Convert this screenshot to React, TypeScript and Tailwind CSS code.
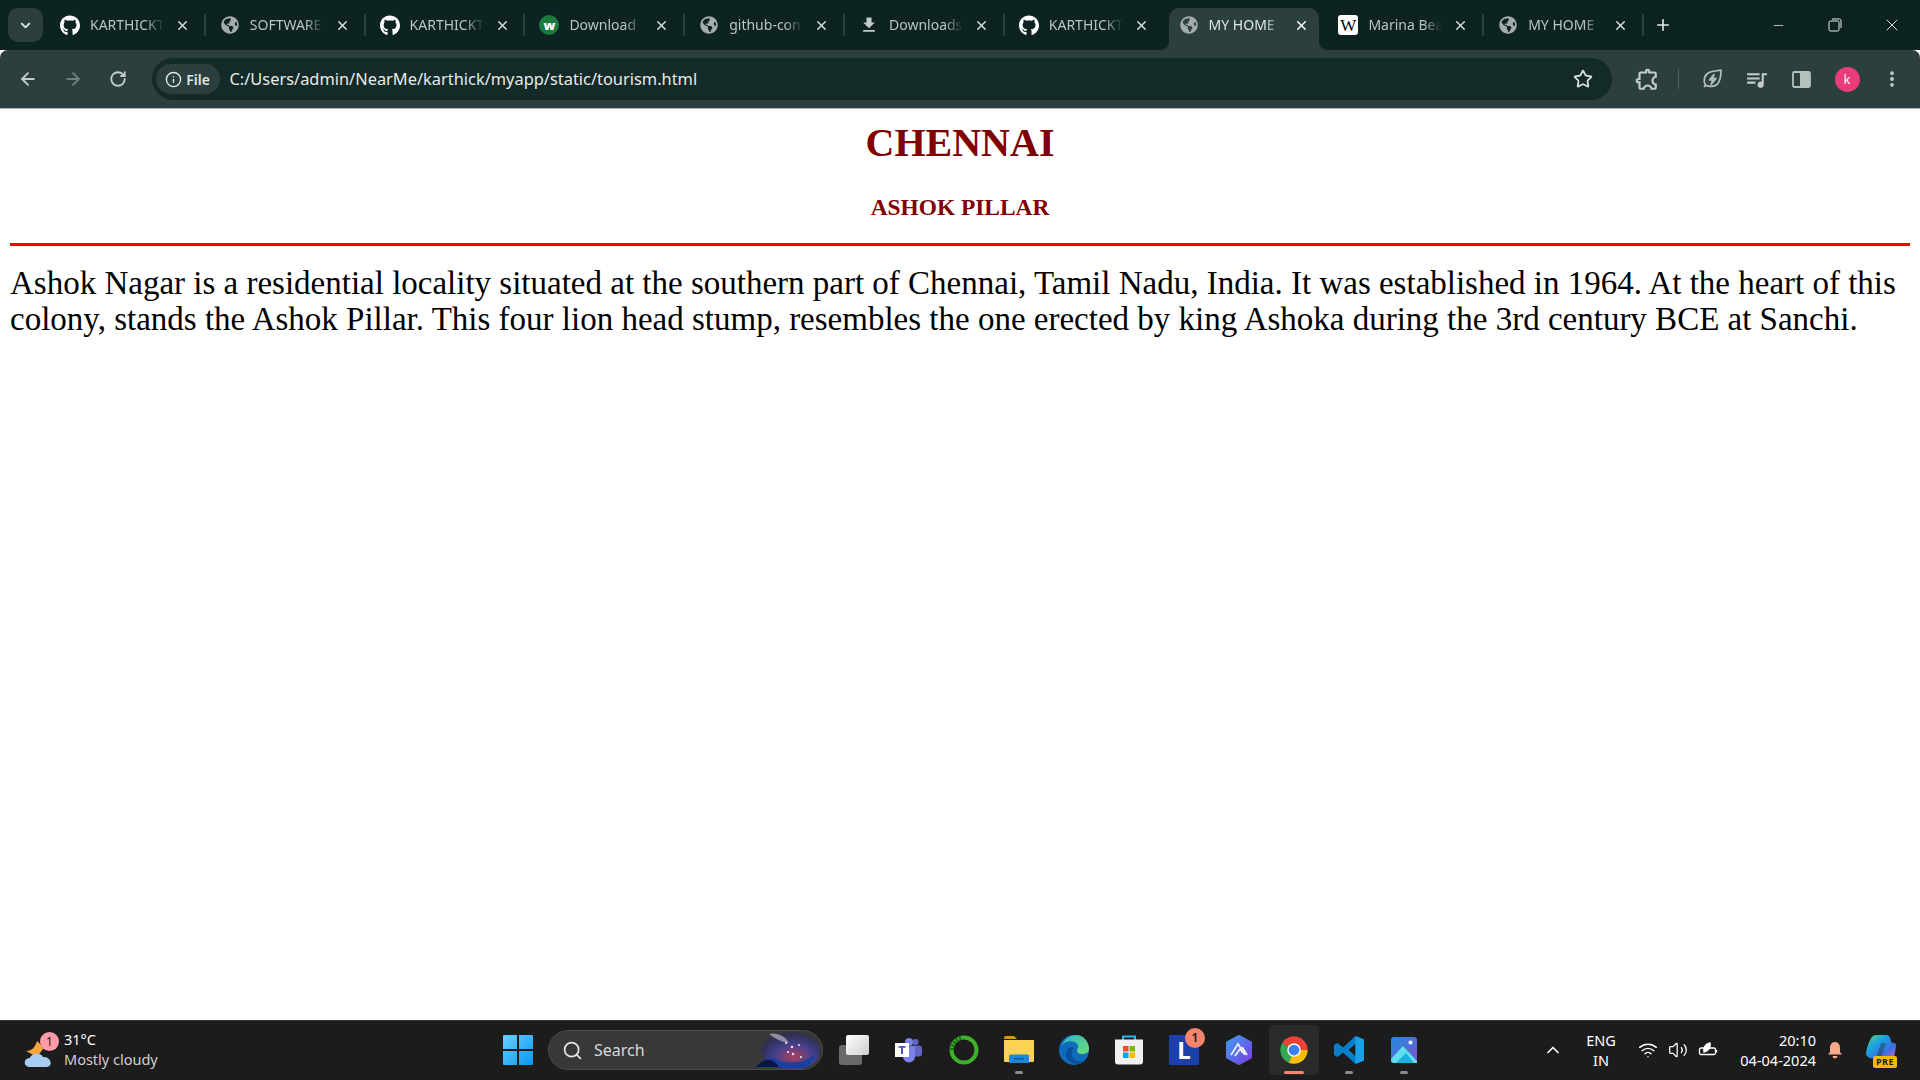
import { ArrowLeft, ArrowRight, ChevronDown, ChevronUp, EllipsisVertical, Info, Minus, Plus, RotateCw, Search, Star, Volume2, Wifi, X } from "lucide-react";
import { FaGithub, FaGlobeAmericas } from "react-icons/fa";
import { MdFileDownload, MdOutlineExtension, MdOutlineQueueMusic } from "react-icons/md";

const tabs = [
  { title: "KARTHICKT", icon: "github" },
  { title: "SOFTWARE", icon: "globe" },
  { title: "KARTHICKT", icon: "github" },
  { title: "Download", icon: "wise" },
  { title: "github-con", icon: "globe" },
  { title: "Downloads", icon: "download" },
  { title: "KARTHICKT", icon: "github" },
  { title: "MY HOME", icon: "globe", active: true },
  { title: "Marina Bea", icon: "wiki" },
  { title: "MY HOME", icon: "globe" },
];

function TabIcon({ icon }: { icon: string }) {
  if (icon === "github") return <FaGithub className="size-[21px] text-white" />;
  if (icon === "globe") return <FaGlobeAmericas className="size-[18px] text-[#a3acab]" />;
  if (icon === "download") return <MdFileDownload className="size-[22px] text-[#c3ccca]" />;
  if (icon === "wise")
    return (
      <span className="flex size-[20px] items-center justify-center rounded-full bg-[#1b7a3d] text-[13px] font-black leading-none text-white">
        w
      </span>
    );
  return (
    <span className="flex size-[20px] items-center justify-center rounded-[3px] bg-white font-['Liberation_Serif',serif] text-[17px] leading-none text-black">
      W
    </span>
  );
}

function Tab({ title, icon, active, hideSep }: { title: string; icon: string; active?: boolean; hideSep?: boolean }) {
  return (
    <div className="relative flex h-[42px] w-[159.8px] shrink-0 items-center pb-[8px] pl-[14px]">
      {active && (
        <>
          <div className="absolute inset-y-0 left-[4px] right-[5px] rounded-t-[10px] bg-[#2b403e]" />
          <svg className="absolute bottom-0 left-[-4px] size-[8px]" viewBox="0 0 8 8">
            <path d="M8 0v8H0a8 8 0 0 0 8-8z" fill="#2b403e" />
          </svg>
          <svg className="absolute bottom-0 right-[-3px] size-[8px]" viewBox="0 0 8 8">
            <path d="M0 0v8h8a8 8 0 0 1-8-8z" fill="#2b403e" />
          </svg>
        </>
      )}
      <div className="relative flex w-[20px] justify-center">
        <TabIcon icon={icon} />
      </div>
      <span
        className={`relative ml-[10px] w-[74px] overflow-hidden whitespace-nowrap font-['Noto_Sans',sans-serif] text-[14px] leading-[20px] [mask-image:linear-gradient(90deg,#000_75%,transparent_100%)] ${
          active ? "text-[#dfe6e4]" : "text-[#b9c5c2]"
        }`}
      >
        {title}
      </span>
      <X className={`relative ml-[11px] size-[15px] ${active ? "text-white" : "text-[#d5dcda]"}`} strokeWidth={2.4} />
      {!hideSep && <div className="absolute right-0 top-[6px] h-[22px] w-[2px] bg-[#2b403e]" />}
    </div>
  );
}

function TabStrip() {
  return (
    <div className="flex h-[50px] shrink-0 items-end bg-[#0c2321]">
      <div className="mb-[8px] ml-[8px] mr-[3px] flex h-[34px] w-[35px] shrink-0 items-center justify-center rounded-[10px] bg-[#2b403e] text-[#dfe6e4]">
        <ChevronDown className="size-[15px]" strokeWidth={3} />
      </div>
      {tabs.map((tab, i) => (
        <Tab key={i} title={tab.title} icon={tab.icon} active={tab.active} hideSep={i === 6 || i === 7} />
      ))}
      <div className="mb-[16px] ml-[5px] flex w-[28px] items-center justify-center text-[#dfe6e4]">
        <Plus className="size-[18px]" strokeWidth={2.2} />
      </div>
      <div className="mb-0 ml-auto flex h-full items-start">
        <div className="flex h-[50px] w-[57px] items-center justify-center text-[#e8eeec]">
          <Minus className="size-[15px]" strokeWidth={1.2} />
        </div>
        <div className="flex h-[50px] w-[56px] items-center justify-center">
          <svg className="size-[14px]" viewBox="0 0 14 14" fill="none" stroke="#e8eeec" strokeWidth="1">
            <rect x="1" y="3" width="10" height="10" rx="1.5" />
            <path d="M4 1h7.5A1.5 1.5 0 0 1 13 2.500V10" />
          </svg>
        </div>
        <div className="flex h-[50px] w-[57px] items-center justify-center text-[#e8eeec]">
          <X className="size-[20px]" strokeWidth={1.1} />
        </div>
      </div>
    </div>
  );
}

function Toolbar() {
  return (
    <div className="flex h-[59px] shrink-0 items-center rounded-t-[8px] border-b border-[#a9b3b1] bg-[#2b403e] pl-[5px] text-[#c3cecb]">
      <div className="flex w-[45.500px] justify-center">
        <ArrowLeft className="size-[20px]" strokeWidth={2.2} />
      </div>
      <div className="flex w-[45.500px] justify-center text-[#6f807d]">
        <ArrowRight className="size-[20px]" strokeWidth={2.2} />
      </div>
      <div className="flex w-[44.500px] justify-center">
        <RotateCw className="size-[18px]" strokeWidth={2.4} />
      </div>
      <div className="ml-[11px] flex h-[42px] w-[1460px] items-center rounded-full bg-[#132a28] pl-[4px] pr-[19px]">
        <div className="flex h-[30px] w-[64px] items-center justify-center gap-[4px] rounded-full bg-[#2b403e] font-['Noto_Sans',sans-serif] text-[14px] font-semibold text-[#dfe6e4]">
          <Info className="size-[17px]" strokeWidth={2} />
          File
        </div>
        <span className="ml-[10px] font-['Noto_Sans',sans-serif] text-[16.4px] leading-none text-[#e6ecea]">
          C:/Users/admin/NearMe/karthick/myapp/static/tourism.html
        </span>
        <Star className="ml-auto size-[20px] text-[#d5dcda]" strokeWidth={2.2} />
      </div>
      <div className="ml-[11.500px] flex w-[45px] justify-center">
        <MdOutlineExtension className="size-[26px] -scale-x-100" />
      </div>
      <div className="flex w-[21px] justify-center">
        <div className="h-[20px] w-[1px] bg-[#51635f]" />
      </div>
      <div className="flex w-[45px] justify-center">
        <svg className="size-[22px]" viewBox="0 0 22 22" fill="none" stroke="#b4c0bd" strokeWidth="1.700" strokeLinejoin="round">
          <path d="M3 19c1-1 1.500-2 1.500-2C2 13 3 7 8 4.500 12 2.500 17 3 20 2c0 5-.5 11-4 14.500-3 2.500-8 2.500-11.500.5" />
          <path d="M13 6.500 8.500 12H12l-2 4.500 5-6h-3.500z" />
        </svg>
      </div>
      <div className="flex w-[45px] justify-center">
        <MdOutlineQueueMusic className="size-[25px]" />
      </div>
      <div className="flex w-[45px] justify-center">
        <svg className="size-[19px]" viewBox="0 0 19 19">
          <rect x="1" y="2" width="17" height="15" rx="1.500" fill="none" stroke="#b4c0bd" strokeWidth="1.800" />
          <rect x="8" y="2" width="10" height="15" rx="1" fill="#b4c0bd" />
        </svg>
      </div>
      <div className="flex w-[46px] justify-center">
        <div className="flex size-[25px] items-center justify-center rounded-full bg-[#ea3b7a] font-['Noto_Sans',sans-serif] text-[13px] leading-none text-white">
          k
        </div>
      </div>
      <div className="flex w-[44px] justify-center">
        <EllipsisVertical className="size-[20px]" strokeWidth={2.6} />
      </div>
    </div>
  );
}

function Tile({ children, indicator, active }: { children: React.ReactNode; indicator?: boolean; active?: boolean }) {
  return (
    <div className={`relative flex h-[50px] w-[50px] items-center justify-center rounded-[5px] ${active ? "bg-[#2a2a2a]" : ""}`}>
      {children}
      {indicator && (
        <div className={`absolute bottom-[1px] h-[3px] rounded-full ${active ? "w-[20px] bg-[#f5836d]" : "w-[8px] bg-[#8d8d8d]"}`} />
      )}
    </div>
  );
}

function WindowsLogo() {
  return (
    <svg className="size-[30px]" viewBox="0 0 30 30">
      <defs>
        <linearGradient id="win" x1="0" y1="0" x2="1" y2="1">
          <stop offset="0" stopColor="#66d3ff" />
          <stop offset="1" stopColor="#0a94f0" />
        </linearGradient>
      </defs>
      <path d="M0 1a1 1 0 0 1 1-1h13v14H0zM16 0h13a1 1 0 0 1 1 1v13H16zM0 16h14v14H1a1 1 0 0 1-1-1zM16 16h14v13a1 1 0 0 1-1 1H16z" fill="url(#win)" />
    </svg>
  );
}

function SearchArt() {
  return (
    <svg className="absolute right-[3px] top-0 h-[38px] w-[64px]" viewBox="0 0 64 38">
      <defs>
        <radialGradient id="sky" cx="0.55" cy="0.65" r="0.6">
          <stop offset="0" stopColor="#a8405f" />
          <stop offset="0.55" stopColor="#43408f" />
          <stop offset="1" stopColor="#2b2b5c" stopOpacity="0.6" />
        </radialGradient>
      </defs>
      <ellipse cx="36" cy="20" rx="30" ry="19" fill="url(#sky)" />
      <path d="M14 3c8-2 16 2 20 9-7-1-14-4-20-9z" fill="#b7b3c2" opacity="0.7" />
      <g fill="#f4e7ef">
        <circle cx="31" cy="12" r="1" />
        <circle cx="37" cy="16" r="1.200" />
        <circle cx="44" cy="14" r="1" />
        <circle cx="38" cy="23" r="1.200" />
        <circle cx="46" cy="26" r="1" />
        <circle cx="33" cy="21" r="1" />
      </g>
      <path d="M2 36c4-6 9-9 14-9 5 0 8 3 12 4 8 1 20 2 32-8-1 6-4 12-12 14H4z" fill="#1a3fa0" />
      <path d="M1 36c5-6 10-8 14-7 4 1 7 4 9 7z" fill="#0c1440" />
    </svg>
  );
}

function ChromeIcon() {
  return (
    <svg className="size-[30px]" viewBox="0 0 24 24">
      <path d="M12 12 23 12A11 11 0 0 0 2.500 6.500z" fill="#ea4335" />
      <path d="M12 12 23 12A11 11 0 0 1 7 21.800z" fill="#fbbc04" />
      <path d="M12 12 2.500 6.500A11 11 0 0 0 8 22.300z" fill="#34a853" />
      <circle cx="12" cy="12" r="5.400" fill="#fff" />
      <circle cx="12" cy="12" r="4.300" fill="#3b82f0" />
    </svg>
  );
}

function TaskIcons() {
  return (
    <>
      <Tile>
        <div className="relative size-[30px]">
          <div className="absolute bottom-0 left-0 h-[20px] w-[23px] rounded-[3px] bg-[#6a6a6a]" />
          <div className="absolute right-0 top-0 h-[20px] w-[23px] rounded-[2px] bg-[linear-gradient(135deg,#ffffff,#cfcfcf)]" />
        </div>
      </Tile>
      <Tile>
        <svg className="size-[28px]" viewBox="0 0 28 28">
          <circle cx="20.500" cy="6" r="3" fill="#6264c4" />
          <rect x="14" y="9.500" width="13" height="11" rx="3" fill="#6264c4" />
          <circle cx="14" cy="6" r="4" fill="#7b83eb" />
          <path d="M8 10.500h12v10a6 6 0 0 1-12 0z" fill="#7b83eb" />
          <rect x="0" y="7" width="14" height="14" fill="#fff" />
          <path d="M3.500 10h7v1.800H8V18H6v-6.200H3.500z" fill="#4b53bc" />
        </svg>
      </Tile>
      <Tile>
        <svg className="size-[30px]" viewBox="0 0 30 30" fill="none">
          <circle cx="15" cy="15" r="12.500" stroke="#3fb02c" strokeWidth="4" />
          <path d="M3 15A12.500 12.500 0 0 1 12 3" stroke="#1d6b1a" strokeWidth="4" strokeDasharray="2 1.500" />
        </svg>
      </Tile>
      <Tile indicator>
        <svg className="size-[30px]" viewBox="0 0 30 30">
          <path d="M0 3a2 2 0 0 1 2-2h8l3 3h-13z" fill="#d49a12" />
          <path d="M0 5h30v21a1 1 0 0 1-1 1H1a1 1 0 0 1-1-1z" fill="#fcd354" />
          <path d="M5 21a1.500 1.500 0 0 1 1.500-1.500h17A1.500 1.500 0 0 1 25 21v7H5z" fill="#1d87d7" />
          <rect x="10" y="23" width="10" height="1.500" fill="#0c5da0" />
        </svg>
      </Tile>
      <Tile>
        <svg className="size-[30px]" viewBox="0 0 30 30">
          <defs>
            <linearGradient id="edge" x1="0" y1="0" x2="1" y2="1">
              <stop offset="0" stopColor="#2ab3d8" />
              <stop offset="1" stopColor="#6fe06a" />
            </linearGradient>
          </defs>
          <circle cx="15" cy="15" r="15" fill="#0f6cbd" />
          <path d="M3 10C6 3 12 0 17 0c7 0 13 6 13 14 0 3-3 5-7 5-3 0-5-1-5-3 0-3 2-3 1-6-2-4-11-6-16 0z" fill="url(#edge)" />
          <path d="M13 12c-4 0-7 4-6 9 1 4 5 8 11 8 3 0 6-1 8-3-5 1-11 0-13-5-1-3 0-6 2-8z" fill="#0c4f9a" />
        </svg>
      </Tile>
      <Tile>
        <svg className="size-[30px]" viewBox="0 0 30 30">
          <path d="M9 5V1.500h12V5" fill="none" stroke="#22b8e8" strokeWidth="2" />
          <path d="M1 4.500h28v22a3 3 0 0 1-3 3H4a3 3 0 0 1-3-3z" fill="#f1f1f1" />
          <rect x="9" y="11" width="5.500" height="5.500" fill="#f25022" />
          <rect x="15.500" y="11" width="5.500" height="5.500" fill="#7fba00" />
          <rect x="9" y="17.500" width="5.500" height="5.500" fill="#00a4ef" />
          <rect x="15.500" y="17.500" width="5.500" height="5.500" fill="#ffb900" />
        </svg>
      </Tile>
      <Tile>
        <div className="relative flex size-[30px] items-center justify-center bg-[#1c3faa] font-['Noto_Sans',sans-serif] text-[24px] font-bold leading-none text-white">
          L
          <span className="absolute right-[-6px] top-[-7px] flex size-[20px] items-center justify-center rounded-full bg-[#f5836d] text-[12px] font-semibold text-[#1c1c1c]">
            1
          </span>
        </div>
      </Tile>
      <Tile>
        <svg className="size-[30px]" viewBox="0 0 30 30">
          <defs>
            <linearGradient id="hex" x1="0" y1="0" x2="1" y2="1">
              <stop offset="0" stopColor="#3f9bf0" />
              <stop offset="1" stopColor="#7a3fe0" />
            </linearGradient>
          </defs>
          <path d="M15 1 27 7.500v15L15 29 3 22.500v-15z" fill="url(#hex)" stroke="url(#hex)" strokeWidth="2" strokeLinejoin="round" />
          <path d="M7 20 14 9l7 11M11 21l5-7 3 4M18 12l5 8" fill="none" stroke="#e8eefc" strokeWidth="1.800" />
        </svg>
      </Tile>
      <Tile indicator active>
        <ChromeIcon />
      </Tile>
      <Tile indicator>
        <svg className="size-[30px]" viewBox="0 0 30 30">
          <path d="M21.500 1 30 4.500v21L21.500 29 9 17.500 3.500 22 0 20v-10l3.500-2L9 12.500zM21.500 9l-7 6 7 6z" fill="#0a7fc9" />
          <path d="M21.500 1 30 4.500v21L21.500 29z" fill="#1c9fe6" />
        </svg>
      </Tile>
      <Tile indicator>
        <svg className="size-[26px]" viewBox="0 0 26 26">
          <defs>
            <linearGradient id="photo" x1="0" y1="0" x2="1" y2="1">
              <stop offset="0" stopColor="#1c8fe0" />
              <stop offset="1" stopColor="#8250c8" />
            </linearGradient>
          </defs>
          <rect width="26" height="26" rx="3" fill="url(#photo)" />
          <circle cx="19.500" cy="5.500" r="2" fill="#fff" />
          <path d="M0 22 12 9l14 15v-1 3H3a3 3 0 0 1-3-3z" fill="#5fe0f0" />
          <path d="M5 26 15 16l8 10z" fill="#1faee0" />
        </svg>
      </Tile>
    </>
  );
}

function Taskbar() {
  return (
    <div className="flex h-[60px] shrink-0 items-center border-t border-[#3a3a3a] bg-[#1c1c1c] pb-[1px] font-['Noto_Sans',sans-serif] text-white">
      <div className="flex w-[503px] shrink-0 items-center pl-[24px]">
        <div className="relative h-[38px] w-[32px] shrink-0">
          <svg className="absolute bottom-0 left-0 h-[32px] w-[32px]" viewBox="0 0 32 32">
            <path d="M2 14c5 0 9-3 11-10 2 2 5 4 6 8l-6 8z" fill="#f5a53c" />
            <path d="M6 30c-7 0-7-9 0-9 1-5 11-6 13-1 8-1 11 10 3 10z" fill="#a9cdf2" />
          </svg>
          <span className="absolute left-[16px] top-[1px] flex size-[19px] items-center justify-center rounded-full bg-[#ff9aa8] text-[12px] leading-none text-[#1c1c1c]">
            1
          </span>
        </div>
        <div className="mb-[3px] ml-[8px] flex flex-col text-[14.500px] leading-[20px]">
          <span>31°C</span>
          <span className="text-[#cfcfcf]">Mostly cloudy</span>
        </div>
      </div>
      <div className="flex w-[30px] justify-center">
        <WindowsLogo />
      </div>
      <div className="relative ml-[15px] flex h-[40px] w-[275px] items-center overflow-hidden rounded-full border border-[#4a4a4a] bg-[#383838] pl-[13px] text-[16px] text-[#d8d8d8]">
        <Search className="size-[21px] text-[#e4e4e4]" strokeWidth={2} />
        <span className="ml-[11px]">Search</span>
        <SearchArt />
      </div>
      <div className="ml-[6px] flex gap-[5px]">
        <TaskIcons />
      </div>
      <ChevronUp className="ml-[114px] size-[20px] text-white" strokeWidth={2} />
      <div className="mb-[1px] ml-[18px] flex w-[40px] flex-col items-center text-[14.500px] leading-[20px]">
        <span>ENG</span>
        <span>IN</span>
      </div>
      <Wifi className="ml-[17px] size-[20px]" strokeWidth={1.700} />
      <Volume2 className="ml-[10px] size-[20px]" strokeWidth={1.500} />
      <svg className="ml-[10px] size-[21px]" viewBox="0 0 21 21" fill="none" stroke="#fff" strokeWidth="1.300">
        <path d="M6 8H3a1.500 1.500 0 0 0-1.500 1.500v3A1.500 1.500 0 0 0 3 14.500h13A1.500 1.500 0 0 0 17.500 13v-3.500A1.500 1.500 0 0 0 16 8h-4" />
        <path d="M18.500 10v2.500" />
        <path d="M6 12c-1-4 1-8 6-9 1 4-1 8-6 9z" fill="#fff" />
      </svg>
      <div className="mb-[1px] ml-[9px] flex w-[88px] flex-col items-end text-[14.500px] leading-[20px]">
        <span>20:10</span>
        <span>04-04-2024</span>
      </div>
      <svg className="ml-[10px] size-[18px]" viewBox="0 0 18 18" fill="#f8a98c">
        <path d="M9 1c3.500 0 5 3 5 6v4l2 2.500H2L4 11V7c0-3 1.500-6 5-6z" />
        <path d="M6.500 15h5a2.500 2.500 0 0 1-5 0z" />
      </svg>
      <div className="relative ml-[22px] h-[32px] w-[30px] shrink-0">
        <svg className="absolute left-0 top-0 size-[30px]" viewBox="0 0 30 30">
          <defs>
            <linearGradient id="cop" x1="0" y1="0" x2="1" y2="1">
              <stop offset="0" stopColor="#6ad36a" />
              <stop offset="0.35" stopColor="#18a5e0" />
              <stop offset="0.7" stopColor="#3a6ee0" />
              <stop offset="1" stopColor="#d060d0" />
            </linearGradient>
          </defs>
          <path d="M12 1h8c3 0 4 2 5 6l1 2h2c2 0 2 2 2 3l-2 12H8c-4 1-8-1-8-5 1-6 4-15 7-17 1-1 3-1 5-1z" fill="url(#cop)" />
          <path d="M15 9h5l-5 15h-5z" fill="#1c1c1c" opacity="0.35" />
        </svg>
        <span className="absolute bottom-[-2px] left-[7px] rounded-[2px] bg-[#f5b800] px-[3px] text-[9px] font-bold leading-[12px] tracking-[0.5px] text-[#1c1c1c]">
          PRE
        </span>
      </div>
    </div>
  );
}

export default function App() {
  return (
    <div className="flex h-screen w-full flex-col overflow-hidden bg-white">
      <TabStrip />
      <Toolbar />
      <main className="flex-1 px-[10px] font-['Liberation_Serif',serif] text-black">
        <h1 className="pt-[11px] text-center text-[40px] font-bold leading-[46px] text-[#800000]">CHENNAI</h1>
        <h2 className="mt-[27px] text-center text-[23.400px] font-bold leading-[28px] text-[#800000]">ASHOK PILLAR</h2>
        <hr className="mt-[22px] h-[3px] border-0 bg-[#ff0000]" />
        <p className="mt-[20px] text-[33px] leading-[35.5px] [font-variant-numeric:oldstyle-nums]">
          Ashok Nagar is a residential locality situated at the southern part of Chennai, Tamil Nadu, India. It was established in 1964. At the heart of this colony, stands the Ashok Pillar. This four lion head stump, resembles the one erected by king Ashoka during the 3rd century BCE at Sanchi.
        </p>
      </main>
      <Taskbar />
    </div>
  );
}
